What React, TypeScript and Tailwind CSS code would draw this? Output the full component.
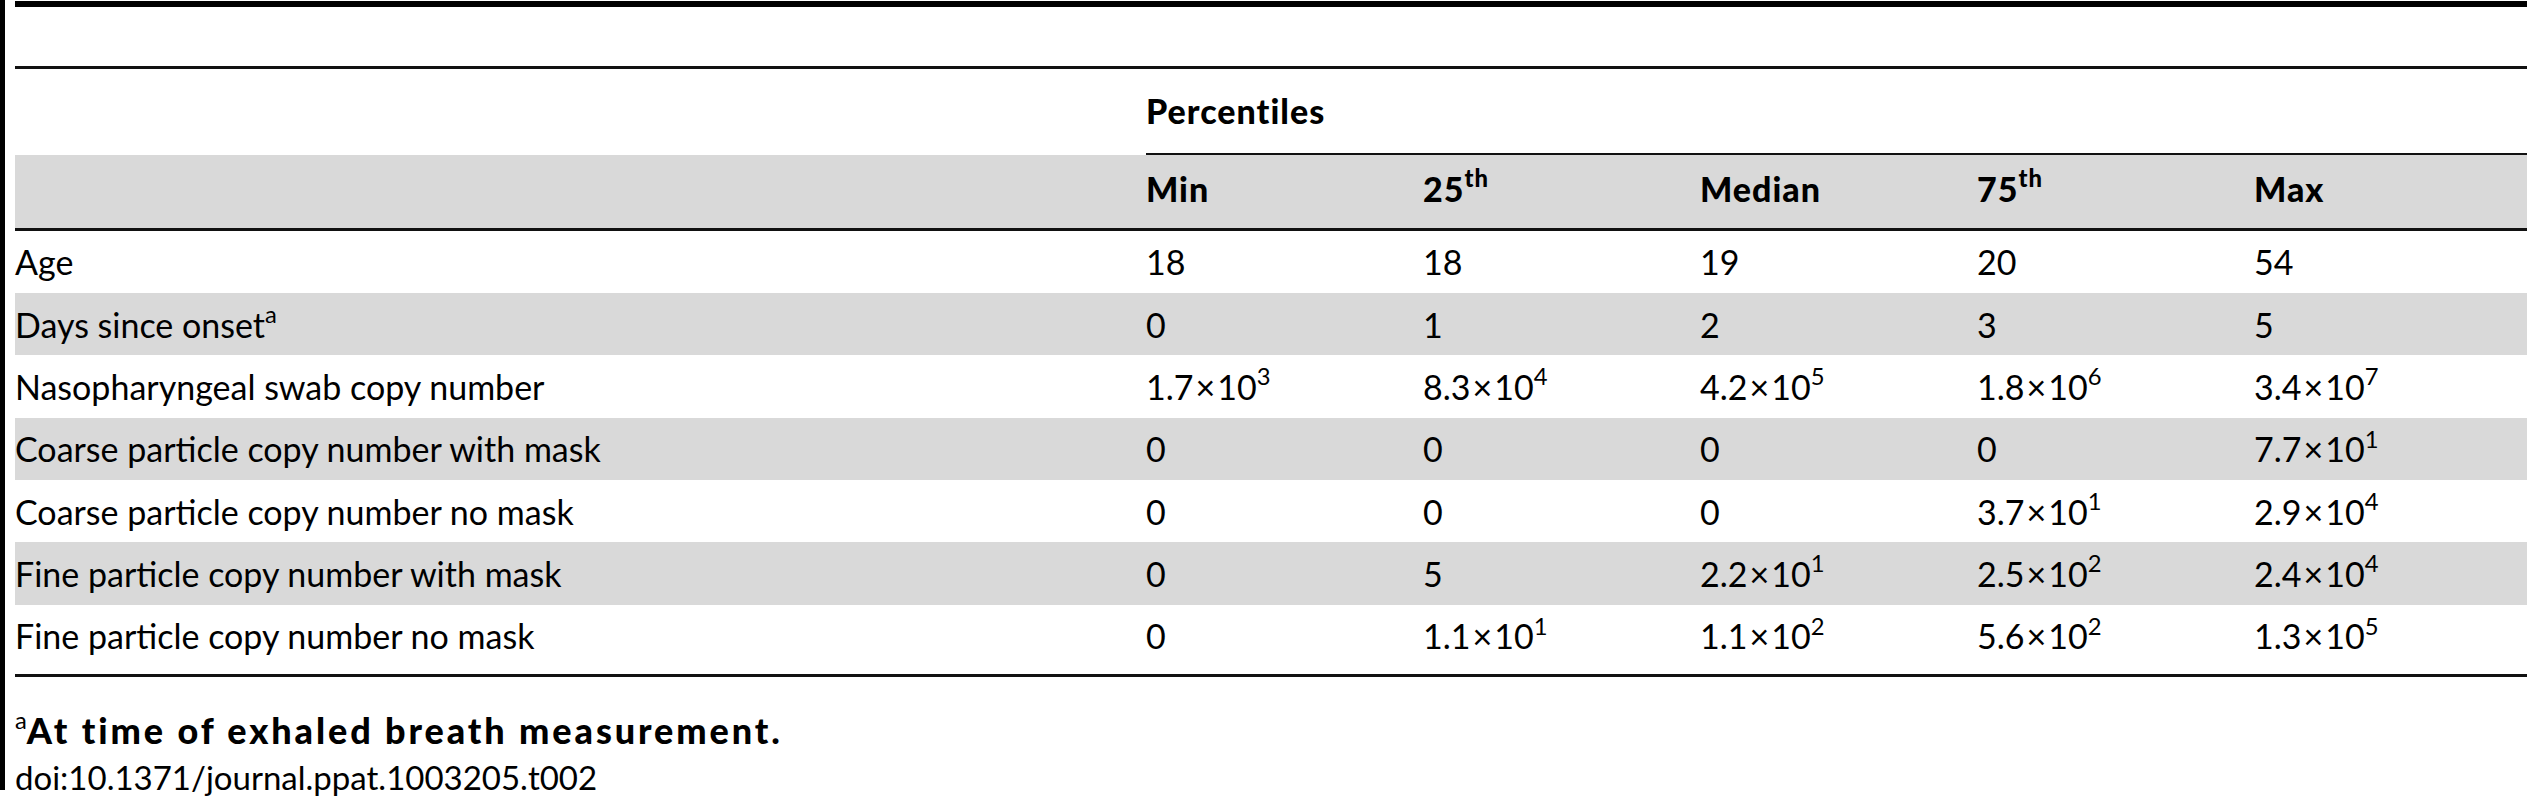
type Val = string | [string, string];

type Row = {
  label: string;
  note?: string;
  values: Val[];
  shaded?: boolean;
};

const rows: Row[] = [
  { label: "Age", values: ["18", "18", "19", "20", "54"] },
  { label: "Days since onset", note: "a", values: ["0", "1", "2", "3", "5"], shaded: true },
  {
    label: "Nasopharyngeal swab copy number",
    values: [["1.7", "3"], ["8.3", "4"], ["4.2", "5"], ["1.8", "6"], ["3.4", "7"]],
  },
  {
    label: "Coarse particle copy number with mask",
    values: ["0", "0", "0", "0", ["7.7", "1"]],
    shaded: true,
  },
  {
    label: "Coarse particle copy number no mask",
    values: ["0", "0", "0", ["3.7", "1"], ["2.9", "4"]],
  },
  {
    label: "Fine particle copy number with mask",
    values: ["0", "5", ["2.2", "1"], ["2.5", "2"], ["2.4", "4"]],
    shaded: true,
  },
  {
    label: "Fine particle copy number no mask",
    values: ["0", ["1.1", "1"], ["1.1", "2"], ["5.6", "2"], ["1.3", "5"]],
  },
];

const cols = "grid grid-cols-[1131px_277px_277px_277px_277px_1fr]";

function Sup({ children }: { children: React.ReactNode }) {
  return <sup className="top-[-0.62em] text-[0.7em]">{children}</sup>;
}

function Cell({ v }: { v: Val }) {
  if (typeof v === "string") return <span>{v}</span>;
  return (
    <span>
      {v[0]}
      <span className="mx-[2px]">×</span>10
      <Sup>{v[1]}</Sup>
    </span>
  );
}

export default function App() {
  return (
    <div className="flex h-[800px] w-[2527px] overflow-hidden bg-white font-['Lato',sans-serif] text-[34px] text-black">
      {/* page edge */}
      <div className="h-[790px] w-[5px] shrink-0 bg-black" />

      <div className="ml-[10px] flex flex-1 flex-col">
        <div className="mt-[1px] h-[6px] bg-black" />
        <div className="h-[60px]" />
        <div className="h-[3px] bg-[#111]" />

        {/* spanning header */}
        <div className={cols}>
          <div className="h-[85px]" />
          <div className="col-span-5 flex flex-col">
            <div className="flex h-[84px] items-center font-black tracking-[1px]">Percentiles</div>
            <div className="h-[2px] bg-[#111]" />
          </div>
        </div>

        <div
          className={`${cols} h-[74px] items-center bg-[#d9d9d9] pb-[6px] font-black tracking-[1px]`}
        >
          <div />
          <div>Min</div>
          <div>
            25<Sup>th</Sup>
          </div>
          <div>Median</div>
          <div>
            75<Sup>th</Sup>
          </div>
          <div>Max</div>
        </div>
        <div className="h-[3px] bg-[#111]" />

        {rows.map((r) => (
          <div
            key={r.label}
            className={`${cols} h-[63.5px] items-center ${r.shaded ? "bg-[#d9d9d9]" : ""}`}
          >
            <div>
              {r.label}
              {r.note && <Sup>{r.note}</Sup>}
            </div>
            {r.values.map((v, i) => (
              <div key={i}>
                <Cell v={v} />
              </div>
            ))}
          </div>
        ))}
        <div className="h-[7px]" />
        <div className="h-[3px] bg-[#111]" />

        {/* footnotes */}
        <div className="mt-[30px] leading-[46px]">
          <Sup>a</Sup>
          <span className="text-[36px] font-black tracking-[2.9px]">
            At time of exhaled breath measurement.
          </span>
        </div>
        <div className="text-[33px] leading-[46px]">doi:10.1371/journal.ppat.1003205.t002</div>
      </div>
    </div>
  );
}
